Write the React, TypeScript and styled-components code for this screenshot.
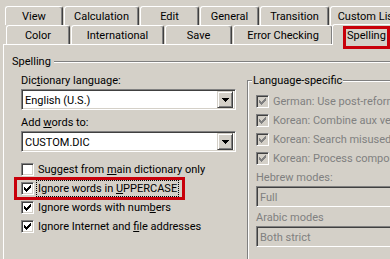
import React from "react";
import styled, { createGlobalStyle } from "styled-components";

const FACE = "#d4d0c8";
const SHADOW = "#808080";
const DARK = "#404040";
const FONT = `Roboto, "Liberation Sans", Arial, sans-serif`;

const Global = createGlobalStyle`
  html, body { margin: 0; padding: 0; background: ${FACE}; }
  body { font-family: ${FONT}; font-size: 11px; color: #000; }
`;

const Window = styled.div`
  width: 390px;
  height: 259px;
  overflow: hidden;
  background: ${FACE};
  padding-top: 6px;
  box-sizing: border-box;
  display: flex;
  flex-direction: column;
  font-family: ${FONT};
  font-size: 11px;
  line-height: 13px;
`;

const TabRow = styled.div<{ $left: number }>`
  display: flex;
  align-items: flex-end;
  gap: 1px;
  padding-left: ${(p) => p.$left}px;
  height: 19px;
  flex: none;
`;

const Tab = styled.div<{ $w: number }>`
  flex: none;
  width: ${(p) => p.$w}px;
  height: 19px;
  box-sizing: border-box;
  border-top: 1px solid #fff;
  border-left: 1px solid #fff;
  border-right: 1px solid ${DARK};
  box-shadow: inset -1px 0 0 ${SHADOW};
  border-radius: 3px 3px 0 0;
  display: flex;
  align-items: center;
  justify-content: center;
  white-space: nowrap;
  overflow: hidden;
  padding-top: 1px;
`;

const SelectedTab = styled.div`
  flex: none;
  position: relative;
  z-index: 1;
  margin-left: -2px;
  width: 80px;
  height: 21px;
  margin-bottom: -1px;
  box-sizing: border-box;
  border-top: 1px solid #fff;
  border-left: 1px solid #fff;
  border-radius: 3px 0 0 0;
  background: ${FACE};
  display: flex;
  align-items: center;
  padding-left: 14px;
  padding-top: 1px;
`;

const Highlight = styled.div<{ $l: number; $t: number; $w: number; $h: number }>`
  position: absolute;
  left: ${(p) => p.$l}px;
  top: ${(p) => p.$t}px;
  width: ${(p) => p.$w}px;
  height: ${(p) => p.$h}px;
  box-sizing: border-box;
  border: 3px solid #c8000a;
  pointer-events: none;
`;

const Panel = styled.div`
  flex: 1;
  margin-left: 3px;
  border-top: 1px solid #fff;
  border-left: 1px solid #fff;
  padding: 10px 0 0 8px;
  display: flex;
  flex-direction: column;
`;

const SectionHeader = styled.div`
  display: flex;
  align-items: center;
  gap: 3px;
  height: 13px;
`;

const Rule = styled.div`
  flex: 1;
  border-top: 1px solid ${SHADOW};
  border-bottom: 1px solid #fff;
  margin-top: 1px;
`;

const Columns = styled.div`
  display: flex;
  align-items: flex-start;
  gap: 11px;
  padding-left: 9px;
  margin-top: 6px;
`;

const LeftCol = styled.div`
  flex: none;
  width: 215px;
  display: flex;
  flex-direction: column;
`;

const FieldLabel = styled.div<{ $gap?: number; $disabled?: boolean }>`
  margin-top: ${(p) => p.$gap ?? 0}px;
  margin-bottom: 2px;
  color: ${(p) => (p.$disabled ? SHADOW : "#000")};
  white-space: nowrap;
`;

const Combo = styled.div<{ $disabled?: boolean; $w?: number }>`
  width: ${(p) => (p.$w ? `${p.$w}px` : "100%")};
  height: 21px;
  box-sizing: border-box;
  border-top: 1px solid ${SHADOW};
  border-left: 1px solid ${SHADOW};
  border-right: 1px solid #fff;
  border-bottom: 1px solid #fff;
  box-shadow: inset 1px 1px 0 ${DARK}, inset -1px -1px 0 ${FACE};
  background: ${(p) => (p.$disabled ? FACE : "#fff")};
  color: ${(p) => (p.$disabled ? SHADOW : "#000")};
  display: flex;
  align-items: center;
  padding: 0 2px 0 3px;
  white-space: nowrap;
`;

const ComboText = styled.span`
  flex: 1;
  padding-top: 1px;
`;

const DropButton = styled.div`
  flex: none;
  width: 16px;
  height: 17px;
  box-sizing: border-box;
  background: ${FACE};
  border-top: 1px solid ${FACE};
  border-left: 1px solid ${FACE};
  border-right: 1px solid ${DARK};
  border-bottom: 1px solid ${DARK};
  box-shadow: inset 1px 1px 0 #fff, inset -1px -1px 0 ${SHADOW};
  display: flex;
  align-items: center;
  justify-content: center;
`;

const CheckList = styled.div`
  display: flex;
  flex-direction: column;
  margin-top: 8px;
`;

const CheckRow = styled.div`
  position: relative;
  height: 19px;
  display: flex;
  align-items: center;
  gap: 2px;
  white-space: nowrap;
`;

const Box = styled.div<{ $disabled?: boolean }>`
  flex: none;
  width: 13px;
  height: 13px;
  box-sizing: border-box;
  border-top: 1px solid ${SHADOW};
  border-left: 1px solid ${SHADOW};
  border-right: 1px solid #fff;
  border-bottom: 1px solid #fff;
  box-shadow: inset 1px 1px 0 ${DARK}, inset -1px -1px 0 ${FACE};
  background: ${(p) => (p.$disabled ? FACE : "#fff")};
  display: flex;
  padding: 2px 0 0 2px;
`;

const CheckText = styled.span<{ $focus?: boolean; $disabled?: boolean }>`
  border: 1px ${(p) => (p.$focus ? "dotted #000" : "solid transparent")};
  padding: 1px 1px;
  color: ${(p) => (p.$disabled ? SHADOW : "#000")};
`;

const GroupBox = styled.div`
  flex: none;
  width: 200px;
  height: 200px;
  margin-top: 6px;
  box-sizing: border-box;
  border: 1px solid ${SHADOW};
  box-shadow: inset 1px 1px 0 #fff;
  display: flex;
  flex-direction: column;
  padding-left: 8px;
`;

const Legend = styled.div`
  align-self: flex-start;
  margin: -7px 0 0 -4px;
  padding: 0 1px;
  background: ${FACE};
  white-space: nowrap;
`;

const GroupChecks = styled.div`
  display: flex;
  flex-direction: column;
  margin-top: 5px;
`;

const Check = ({ color }: { color: string }) => (
  <svg width="7" height="7" viewBox="0 0 7 7" shapeRendering="crispEdges">
    <g fill={color}>
      <rect x="6" y="0" width="1" height="1" />
      <rect x="5" y="1" width="2" height="1" />
      <rect x="0" y="2" width="1" height="1" />
      <rect x="4" y="2" width="3" height="1" />
      <rect x="0" y="3" width="2" height="1" />
      <rect x="3" y="3" width="3" height="1" />
      <rect x="0" y="4" width="5" height="1" />
      <rect x="1" y="5" width="3" height="1" />
      <rect x="2" y="6" width="1" height="1" />
    </g>
  </svg>
);

const Arrow = () => (
  <svg width="7" height="4" viewBox="0 0 7 4" shapeRendering="crispEdges">
    <g fill="#000">
      <rect x="0" y="0" width="7" height="1" />
      <rect x="1" y="1" width="5" height="1" />
      <rect x="2" y="2" width="3" height="1" />
      <rect x="3" y="3" width="1" height="1" />
    </g>
  </svg>
);

const Checkbox = ({
  checked,
  disabled,
  focus,
  children,
}: {
  checked?: boolean;
  disabled?: boolean;
  focus?: boolean;
  children: React.ReactNode;
}) => (
  <CheckRow>
    <Box $disabled={disabled}>{checked && <Check color={disabled ? SHADOW : "#000"} />}</Box>
    <CheckText $focus={focus} $disabled={disabled}>
      {children}
    </CheckText>
    {focus && <Highlight $l={-7} $t={-2} $w={171} $h={23} />}
  </CheckRow>
);

const row1 = [
  { t: "View", w: 58 },
  { t: "Calculation", w: 75 },
  { t: "Edit", w: 59 },
  { t: "General", w: 59 },
  { t: "Transition", w: 69 },
  { t: "Custom Lists", w: 80 },
];
const row2 = [
  { t: "Color", w: 64 },
  { t: "International", w: 93 },
  { t: "Save", w: 67 },
  { t: "Error Checking", w: 100 },
];

export default function App() {
  return (
    <>
      <Global />
      <Window>
        <TabRow $left={5}>
          {row1.map((r) => (
            <Tab key={r.t} $w={r.w}>
              {r.t}
            </Tab>
          ))}
        </TabRow>
        <TabRow $left={6}>
          {row2.map((r) => (
            <Tab key={r.t} $w={r.w}>
              {r.t}
            </Tab>
          ))}
          <SelectedTab>
            Spelling
            <Highlight $l={10} $t={1} $w={47} $h={23} />
          </SelectedTab>
        </TabRow>
        <Panel>
          <SectionHeader>
            <span>Spelling</span>
            <Rule />
          </SectionHeader>
          <Columns>
            <LeftCol>
              <FieldLabel>
                Dic<u>t</u>ionary language:
              </FieldLabel>
              <Combo>
                <ComboText>English (U.S.)</ComboText>
                <DropButton>
                  <Arrow />
                </DropButton>
              </Combo>
              <FieldLabel $gap={6}>
                Add <u>w</u>ords to:
              </FieldLabel>
              <Combo>
                <ComboText>CUSTOM.DIC</ComboText>
                <DropButton>
                  <Arrow />
                </DropButton>
              </Combo>
              <CheckList>
                <Checkbox>
                  Suggest from <u>m</u>ain dictionary only
                </Checkbox>
                <Checkbox checked focus>
                  Ignore words in <u>U</u>PPERCASE
                </Checkbox>
                <Checkbox checked>
                  Ignore words with num<u>b</u>ers
                </Checkbox>
                <Checkbox checked>
                  Ignore Internet and <u>f</u>ile addresses
                </Checkbox>
              </CheckList>
            </LeftCol>
            <GroupBox>
              <Legend>Language-specific</Legend>
              <GroupChecks>
                <Checkbox checked disabled>
                  German: Use post-reform rules
                </Checkbox>
                <Checkbox checked disabled>
                  Korean: Combine aux verb/adj.
                </Checkbox>
                <Checkbox checked disabled>
                  Korean: Search misused word list
                </Checkbox>
                <Checkbox checked disabled>
                  Korean: Process compound nouns
                </Checkbox>
              </GroupChecks>
              <FieldLabel $gap={3} $disabled>
                Hebrew modes:
              </FieldLabel>
              <Combo $disabled $w={180}>
                <ComboText>Full</ComboText>
              </Combo>
              <FieldLabel $gap={4} $disabled>
                Arabic modes
              </FieldLabel>
              <Combo $disabled $w={180}>
                <ComboText>Both strict</ComboText>
              </Combo>
            </GroupBox>
          </Columns>
        </Panel>
      </Window>
    </>
  );
}
